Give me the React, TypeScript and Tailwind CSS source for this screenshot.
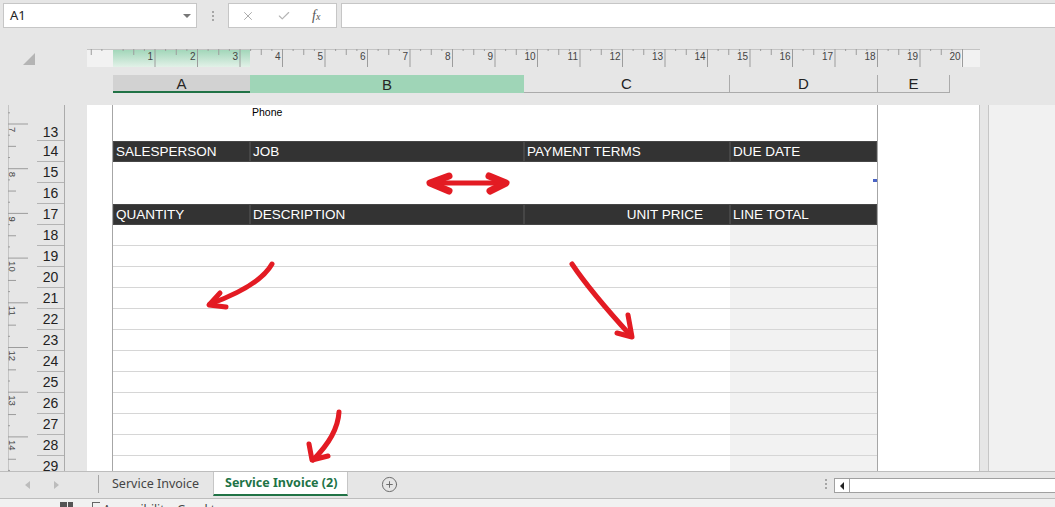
import React from 'react';
import { X, Check, CirclePlus } from 'lucide-react';

const GRID = 'grid grid-cols-[137px_274px_206px_147px]';

function HRuler() {
  const x0 = 25.5;
  const cm = 42.5;
  const marks: React.ReactNode[] = [];
  for (let q = -2; q <= 84; q++) {
    const x = x0 + (q * cm) / 4;
    if (x < 0 || x > 880) continue;
    const major = q % 4 === 0;
    const half = !major && q % 2 === 0;
    if (major && q > 0) {
      marks.push(<line key={'t' + q} x1={x} y1={0} x2={x} y2={18} stroke="#9c9c9c" strokeWidth={1} />);
      marks.push(
        <text key={'n' + q} x={x - 2} y={10.5} textAnchor="end" fontSize={10} fill="#444" fontFamily="Liberation Sans, sans-serif">
          {q / 4}
        </text>
      );
    } else if (half) {
      marks.push(<line key={'t' + q} x1={x} y1={0} x2={x} y2={6} stroke="#9c9c9c" strokeWidth={1} />);
    } else if (!major) {
      marks.push(<line key={'t' + q} x1={x} y1={0} x2={x} y2={2} stroke="#9c9c9c" strokeWidth={1} />);
    }
  }
  return (
    <svg width={893} height={18} className="block">
      <defs>
        <linearGradient id="rg" x1="0" y1="0" x2="0" y2="1">
          <stop offset="0" stopColor="#9fd5b7" />
          <stop offset="1" stopColor="#e2f1e8" />
        </linearGradient>
      </defs>
      <rect x={0} y={0} width={26} height={18} fill="#f2f2f2" />
      <rect x={26} y={0} width={137} height={18} fill="url(#rg)" />
      <rect x={874} y={0} width={19} height={18} fill="#f2f2f2" />
      <line x1={0} y1={0.5} x2={893} y2={0.5} stroke="#c4c4c4" />
      {marks}
    </svg>
  );
}

function VRuler() {
  const y0 = 19;
  const cm = 44.7;
  const marks: React.ReactNode[] = [];
  for (let q = -3; q <= 34; q++) {
    const y = y0 + (q * cm) / 4;
    if (y < 0 || y > 366) continue;
    const major = q % 4 === 0;
    const half = !major && q % 2 === 0;
    if (major) {
      const n = 7 + q / 4;
      marks.push(<line key={'t' + q} x1={8} y1={y} x2={28} y2={y} stroke="#9c9c9c" />);
      marks.push(
        <text key={'n' + q} transform={`translate(9 ${y + 3}) rotate(90)`} fontSize={9.5} fill="#444" fontFamily="Liberation Sans, sans-serif">
          {n}
        </text>
      );
    } else if (half) {
      marks.push(<line key={'t' + q} x1={8} y1={y} x2={16} y2={y} stroke="#9c9c9c" />);
    } else {
      marks.push(<line key={'t' + q} x1={8} y1={y} x2={10} y2={y} stroke="#9c9c9c" />);
    }
  }
  return (
    <svg width={37} height={366} className="block">
      <line x1={8.5} y1={0} x2={8.5} y2={366} stroke="#c4c4c4" />
      {marks}
    </svg>
  );
}

function DarkRow({ cells }: { cells: { text: string; right?: boolean }[] }) {
  return (
    <div className={`${GRID} h-[21px] shrink-0 bg-[#333333]`}>
      {cells.map((c, i) => (
        <div
          key={i}
          className={`flex items-center border border-[#464646] pl-[2px] text-white text-[13.5px] leading-none ${c.right ? 'justify-end pr-[26px]' : ''}`}
        >
          {c.text}
        </div>
      ))}
    </div>
  );
}

export default function App() {
  const rowNums = Array.from({ length: 16 }, (_, i) => 14 + i);
  const gridRows = Array.from({ length: 12 }, (_, i) => i);

  return (
    <div className="relative w-[1055px] h-[507px] overflow-hidden bg-[#e6e6e6] font-['Noto_Sans',sans-serif] text-[#222]">
      {/* formula bar */}
      <div className="flex h-[33px] items-start pt-[3px] pl-[3px]">
        <div className="flex h-[25px] w-[194px] items-center justify-between border border-[#c6c6c6] bg-white pl-[6px] pr-[5px]">
          <span className="text-[13px]">A1</span>
          <span className="h-0 w-0 border-x-[4px] border-t-[4px] border-x-transparent border-t-[#777]" />
        </div>
        <div className="flex w-[31px] flex-col items-center gap-[2px] pt-[8px]">
          <span className="h-[2px] w-[2px] bg-[#a6a6a6]" />
          <span className="h-[2px] w-[2px] bg-[#a6a6a6]" />
          <span className="h-[2px] w-[2px] bg-[#a6a6a6]" />
        </div>
        <div className="flex h-[25px] w-[109px] items-center border border-[#c6c6c6] bg-white">
          <X className="ml-[12px] h-[14px] w-[14px] text-[#a6a6a6]" strokeWidth={1.6} />
          <Check className="ml-[22px] h-[14px] w-[14px] text-[#b4b4b4]" strokeWidth={2} />
          <span className="ml-[21px] font-['Liberation_Serif',serif] text-[14px] italic text-[#555]">
            f<span className="text-[10px]">x</span>
          </span>
        </div>
        <div className="ml-[4px] h-[25px] flex-1 border-y border-l border-[#c6c6c6] bg-white" />
      </div>

      {/* ruler */}
      <div className="mt-[16px] flex h-[18px]">
        <div className="w-[87px] pl-[23px] pt-[4px]">
          <svg width={12} height={12} className="block">
            <polygon points="12,0 12,12 0,12" fill="#b4b4b4" />
          </svg>
        </div>
        <HRuler />
      </div>

      {/* column headers */}
      <div className="mt-[8px] flex h-[18px] font-['Liberation_Sans',sans-serif] text-[15px] leading-none">
        <div className="w-[113px]" />
        <div className="flex w-[137px] items-center justify-center border-b-2 border-[#217346] bg-[#d2d2d2] text-[#262626]">A</div>
        <div className="flex w-[274px] items-center justify-center bg-[#9fd5b7] text-[#262626]">B</div>
        <div className="flex w-[206px] items-center justify-center border-b border-r border-[#ababab]">C</div>
        <div className="flex w-[148px] items-center justify-center border-b border-r border-[#ababab]">D</div>
        <div className="flex w-[72px] items-center justify-center border-b border-r border-[#ababab]">E</div>
      </div>

      {/* sheet area */}
      <div className="mt-[12px] flex h-[366px] overflow-hidden">
        <div className="w-[37px] shrink-0">
          <VRuler />
        </div>
        <div className="flex w-[28px] shrink-0 flex-col border-r border-[#ababab] font-['Liberation_Sans',sans-serif] text-[14px]">
          <div className="flex h-[36px] shrink-0 items-end justify-center border-b border-[#b4b4b4] leading-[16px]">13</div>
          {rowNums.map((n) => (
            <div key={n} className="flex h-[21px] shrink-0 items-center justify-center border-b border-[#b4b4b4] leading-none">
              {n}
            </div>
          ))}
        </div>
        <div className="w-[22px] shrink-0" />

        {/* page */}
        <div className="flex w-[892px] shrink-0 bg-white font-['Liberation_Sans',sans-serif]">
          <div className="w-[25px] shrink-0" />
          <div className="flex w-[766px] shrink-0 flex-col border-x border-[#a6a6a6]">
            <div className={`${GRID} h-[36px] shrink-0`}>
              <div />
              <div className="pl-[2px] text-[10.5px] leading-[14px] text-black">Phone</div>
            </div>
            <DarkRow cells={[{ text: 'SALESPERSON' }, { text: 'JOB' }, { text: 'PAYMENT TERMS' }, { text: 'DUE DATE' }]} />
            <div className={`${GRID} h-[21px] shrink-0`}>
              <div />
              <div />
              <div />
              <div className="flex items-end justify-end pb-[1px]">
                <span className="h-[3px] w-[4px] bg-[#4a63c4]" />
              </div>
            </div>
            <div className="h-[21px] shrink-0" />
            <DarkRow cells={[{ text: 'QUANTITY' }, { text: 'DESCRIPTION' }, { text: 'UNIT PRICE', right: true }, { text: 'LINE TOTAL' }]} />
            {gridRows.map((r) => (
              <div key={r} className={`${GRID} h-[21px] shrink-0 border-b border-[#d6d6d6]`}>
                <div />
                <div />
                <div />
                <div className="bg-[#f2f2f2]" />
              </div>
            ))}
          </div>
          <div className="flex-1" />
        </div>
        <div className="w-[10px] shrink-0 border-x border-[#c6c6c6] bg-[#e6e6e6]" />
        <div className="flex-1 bg-[#f1f1f1]" />
      </div>

      {/* sheet tabs */}
      <div className="flex h-[28px] items-start border-y border-[#bdbdbd] bg-[#e6e6e6] text-[12.5px]">
        <div className="flex h-[26px] w-[98px] shrink-0 items-center">
          <span className="ml-[25px] h-0 w-0 border-y-[4px] border-r-[5px] border-y-transparent border-r-[#bcbcbc]" />
          <span className="ml-[24px] h-0 w-0 border-y-[4px] border-l-[5px] border-y-transparent border-l-[#bcbcbc]" />
        </div>
        <div className="mt-[3px] h-[18px] w-px shrink-0 bg-[#a6a6a6]" />
        <div className="flex h-[24px] w-[114px] shrink-0 items-center pl-[13px] text-[#444]">Service Invoice</div>
        <div className="flex h-[24px] w-[135px] shrink-0 items-center border-x border-b-2 border-x-[#c6c6c6] border-b-[#217346] bg-white pl-[11px] font-bold text-[#217346]">
          Service Invoice (2)
        </div>
        <CirclePlus className="ml-[33px] mt-[4px] h-[17px] w-[17px] shrink-0 text-[#6b6b6b]" strokeWidth={1.4} />
        <div className="flex-1" />
        <div className="mt-[7px] flex w-[16px] shrink-0 flex-col items-center gap-[2px]">
          <span className="h-[2px] w-[2px] bg-[#a6a6a6]" />
          <span className="h-[2px] w-[2px] bg-[#a6a6a6]" />
          <span className="h-[2px] w-[2px] bg-[#a6a6a6]" />
        </div>
        <div className="mt-[6px] flex h-[15px] w-[221px] shrink-0 border border-r-0 border-[#a0a0a0] bg-white">
          <div className="flex w-[15px] items-center justify-center border-r border-[#a0a0a0]">
            <span className="h-0 w-0 border-y-[4px] border-r-[4px] border-y-transparent border-r-[#222]" />
          </div>
        </div>
      </div>

      {/* status bar */}
      <div className="flex h-[8px] items-start overflow-hidden bg-[#f1f1f1] text-[12px] leading-[16px] text-[#444]">
        <div className="ml-[60px] mt-[3px] flex gap-[1px]">
          <span className="h-[8px] w-[7px] bg-[#555]" />
          <span className="h-[8px] w-[5px] bg-[#555]" />
        </div>
        <span className="ml-[19px] mt-[3px] h-[8px] w-[8px] border-l border-t border-[#666]" />
        <span className="ml-[3px] mt-[3px]">Accessibility: Good to go</span>
      </div>

      {/* red annotation arrows */}
      <svg className="pointer-events-none absolute left-0 top-0" width={1055} height={507}>
        <g fill="none" stroke="#e31b23" strokeLinecap="round" strokeLinejoin="round">
          <path d="M432 183 L504 183" strokeWidth={5} />
          <path d="M449 176 L430 183 L449 191" strokeWidth={7} />
          <path d="M489 176 L506 183 L490 191" strokeWidth={7} />
          <path d="M272 264 C263 280 240 293 210 304" strokeWidth={5} />
          <path d="M220 293 L209 305 L226 307" strokeWidth={5} />
          <path d="M572 264 C584 282 600 302 631 336" strokeWidth={5} />
          <path d="M628 315 L632 337 L617 333" strokeWidth={5} />
          <path d="M339 412 C338 430 326 447 313 460" strokeWidth={5} />
          <path d="M309 444 L312 460 L328 456" strokeWidth={5} />
        </g>
      </svg>
    </div>
  );
}
